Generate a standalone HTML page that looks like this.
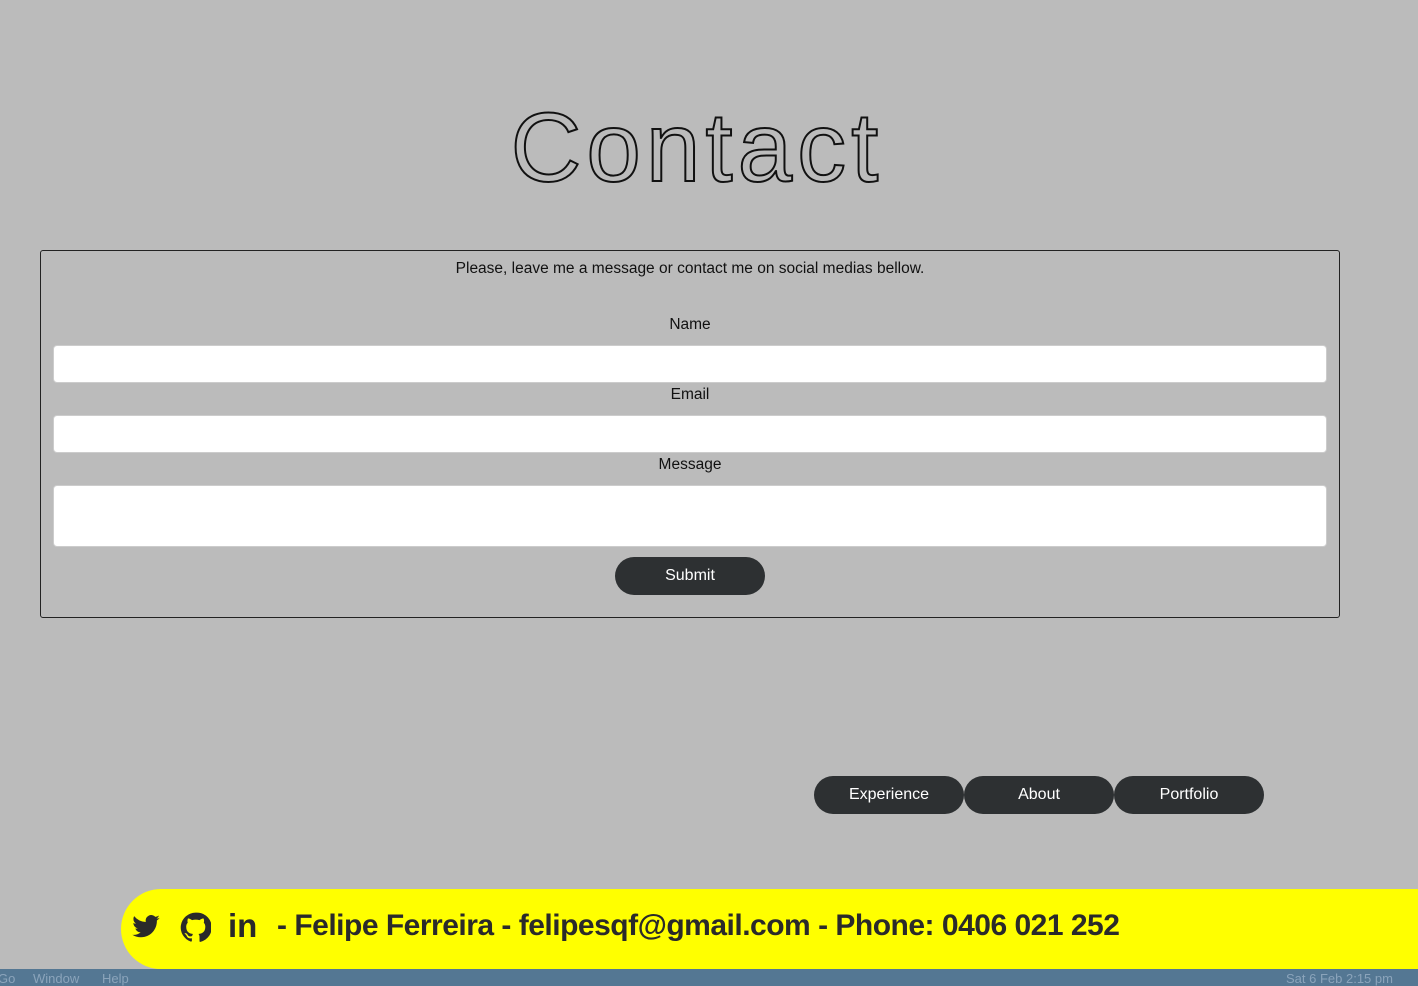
<!DOCTYPE html>
<html><head><meta charset="utf-8"><style>
*{box-sizing:border-box;margin:0;padding:0}
body{width:1418px;height:986px;background:#bbbbbb;font-family:"Liberation Sans",sans-serif;position:relative;overflow:hidden;color:#111}
h1{position:absolute;left:3px;width:1388px;text-align:center;top:87px;font-size:98px;line-height:120px;font-weight:normal;color:#bbb;-webkit-text-stroke:2px #111;letter-spacing:5px}
.box{position:absolute;left:40px;top:250px;width:1300px;height:368px;border:1px solid #222;border-radius:3px}
.t{position:absolute;left:0;width:100%;text-align:center;font-size:15.5px}
.in{position:absolute;left:12px;width:1274px;height:38px;background:#fff;border:1px solid #ccc;border-radius:4px}
.btn{position:absolute;height:38px;width:150px;background:#2d3032;color:#fff;border-radius:19px;text-align:center;line-height:38px;font-size:16px}
.bar{position:absolute;left:121px;top:889px;width:1320px;height:80px;background:#ffff00;border-radius:40px 0 0 40px}
.ft{position:absolute;left:277px;top:909px;font-size:30px;color:#2a2a2a;white-space:nowrap;font-weight:bold;letter-spacing:-0.5px}
.mb{position:absolute;left:0;top:969px;width:1418px;height:17px;background:#547793;color:#8ba4bb;font-size:13px}
</style></head><body>
<h1>Contact</h1>
<div class="box">
<div class="t" style="top:9px">Please, leave me a message or contact me on social medias bellow.</div>
<div class="t" style="top:65px">Name</div>
<div class="in" style="top:94px"></div>
<div class="t" style="top:135px">Email</div>
<div class="in" style="top:164px"></div>
<div class="t" style="top:205px">Message</div>
<div class="in" style="top:234px;height:62px"></div>
<div class="btn" style="left:574px;top:306px">Submit</div>
</div>
<div class="btn" style="left:814px;top:776px">Experience</div>
<div class="btn" style="left:964px;top:776px">About</div>
<div class="btn" style="left:1114px;top:776px">Portfolio</div>
<div class="bar"></div>
<svg style="position:absolute;left:131px;top:912px" width="30" height="30" viewBox="0 0 24 24"><path fill="#2a2a2a" d="M23 4.6c-.8.4-1.7.6-2.6.7.9-.6 1.6-1.4 2-2.5-.9.5-1.9.9-2.9 1.1A4.5 4.5 0 0 0 11.8 8 12.8 12.8 0 0 1 2.5 3.3a4.5 4.5 0 0 0 1.4 6c-.7 0-1.4-.2-2-.6 0 2.2 1.6 4 3.6 4.4-.7.2-1.4.2-2 .1.6 1.8 2.2 3.1 4.2 3.1A9 9 0 0 1 1 18.2a12.8 12.8 0 0 0 6.9 2c8.3 0 12.8-6.9 12.8-12.8v-.6c.9-.6 1.6-1.4 2.3-2.2z"/></svg>
<svg style="position:absolute;left:180px;top:912px" width="31" height="31" viewBox="0 0 24 24"><path fill="#2a2a2a" d="M12 .5a11.5 11.5 0 0 0-3.6 22.4c.6.1.8-.3.8-.6v-2c-3.2.7-3.9-1.5-3.9-1.5-.5-1.3-1.3-1.7-1.3-1.7-1-.7.1-.7.1-.7 1.2.1 1.8 1.2 1.8 1.2 1 1.8 2.8 1.3 3.5 1 .1-.8.4-1.3.7-1.6-2.6-.3-5.3-1.3-5.3-5.7 0-1.3.5-2.3 1.2-3.1-.1-.3-.5-1.5.1-3.1 0 0 1-.3 3.2 1.2a11 11 0 0 1 5.8 0c2.2-1.5 3.2-1.2 3.2-1.2.6 1.6.2 2.8.1 3.1.7.8 1.2 1.9 1.2 3.1 0 4.4-2.7 5.4-5.3 5.7.4.4.8 1.1.8 2.2v3.3c0 .3.2.7.8.6A11.5 11.5 0 0 0 12 .5z"/></svg>
<div style="position:absolute;left:228px;top:907px;font-size:33px;font-weight:bold;color:#2a2a2a">in</div>
<div class="ft">- Felipe Ferreira - felipesqf@gmail.com - Phone: 0406 021 252</div>
<div class="mb"><span style="position:absolute;left:-2px;top:2px">Go</span><span style="position:absolute;left:33px;top:2px">Window</span><span style="position:absolute;left:102px;top:2px">Help</span><span style="position:absolute;left:1286px;top:2px">Sat 6 Feb  2:15 pm</span></div>
</body></html>
